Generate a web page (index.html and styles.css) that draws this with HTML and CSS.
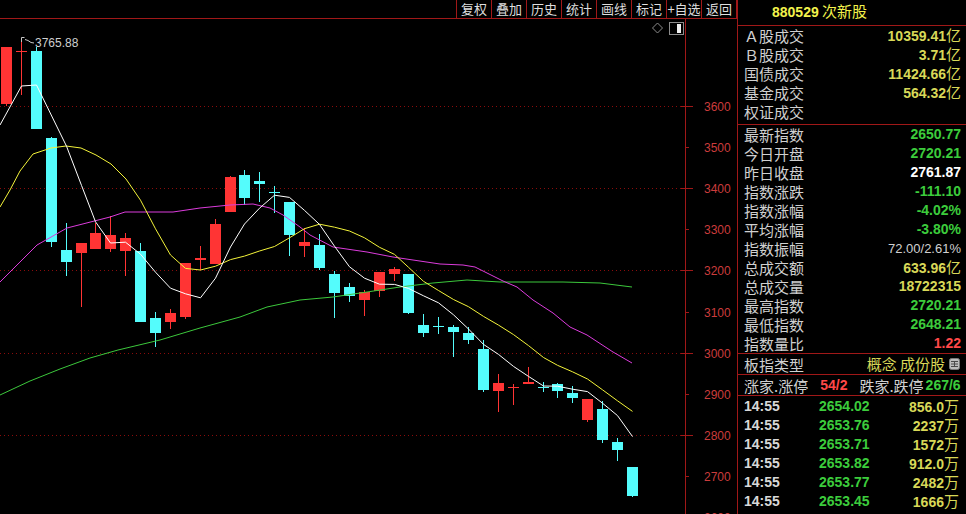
FILE: index.html
```html
<!DOCTYPE html>
<html>
<head>
    <meta charset="utf-8">
    <link rel="stylesheet" href="styles.css">
</head>
<body>
    <div class="screen">
        <div class="left">
            <div class="toolbar">
                <span class="tool">复权</span>
                <span class="tool">叠加</span>
                <span class="tool">历史</span>
                <span class="tool">统计</span>
                <span class="tool">画线</span>
                <span class="tool">标记</span>
                <span class="tool">+自选</span>
                <span class="tool">返回</span>
            </div>
            <svg class="chart" viewBox="0 18 737 496" width="737" height="496"></svg>
        </div>

        <div class="panel">
            <div class="title"><b>880529</b> 次新股</div>

            <div class="block first">
                <div class="row"><span class="lbl">Ａ股成交</span><span class="num yel">10359.41<i class="unit">亿</i></span></div>
                <div class="row"><span class="lbl">Ｂ股成交</span><span class="num yel">3.71<i class="unit">亿</i></span></div>
                <div class="row"><span class="lbl">国债成交</span><span class="num yel">11424.66<i class="unit">亿</i></span></div>
                <div class="row"><span class="lbl">基金成交</span><span class="num yel">564.32<i class="unit">亿</i></span></div>
                <div class="row"><span class="lbl">权证成交</span><span class="num"></span></div>
            </div>

            <div class="block">
                <div class="row"><span class="lbl">最新指数</span><span class="num grn">2650.77</span></div>
                <div class="row"><span class="lbl">今日开盘</span><span class="num grn">2720.21</span></div>
                <div class="row"><span class="lbl">昨日收盘</span><span class="num wht">2761.87</span></div>
                <div class="row"><span class="lbl">指数涨跌</span><span class="num grn">-111.10</span></div>
                <div class="row"><span class="lbl">指数涨幅</span><span class="num grn">-4.02%</span></div>
                <div class="row"><span class="lbl">平均涨幅</span><span class="num grn">-3.80%</span></div>
                <div class="row"><span class="lbl">指数振幅</span><span class="num thin">72.00/2.61%</span></div>
                <div class="row"><span class="lbl">总成交额</span><span class="num yel">633.96<i class="unit">亿</i></span></div>
                <div class="row"><span class="lbl">总成交量</span><span class="num yel">18722315</span></div>
                <div class="row"><span class="lbl">最高指数</span><span class="num grn">2720.21</span></div>
                <div class="row"><span class="lbl">最低指数</span><span class="num grn">2648.21</span></div>
                <div class="row"><span class="lbl">指数量比</span><span class="num red">1.22</span></div>
            </div>

            <div class="block kind">
                <span class="lbl">板指类型</span>
                <span class="kind-val">概念 成份股
                    <svg class="ico" width="11" height="12" viewBox="0 0 11 12">
                        <rect x="0.5" y="0.5" width="10" height="11" rx="2" fill="#bdbdbd" stroke="#7a7a7a"/>
                        <path d="M2 3.5h7M2 6h7M2 8.5h7M5.5 3v6" stroke="#4a4a4a"/>
                    </svg>
                </span>
            </div>

            <div class="block breadth">
                <span class="lbl">涨家.涨停</span>
                <span class="num red count">54/2</span>
                <span class="lbl fall">跌家.跌停</span>
                <span class="num grn">267/6</span>
            </div>

            <div class="ticks">
                <div class="tick"><span class="num time">14:55</span><span class="num grn">2654.02</span><span class="num yel vol">856.0<i class="unit">万</i></span></div>
                <div class="tick"><span class="num time">14:55</span><span class="num grn">2653.76</span><span class="num yel vol">2237<i class="unit">万</i></span></div>
                <div class="tick"><span class="num time">14:55</span><span class="num grn">2653.71</span><span class="num yel vol">1572<i class="unit">万</i></span></div>
                <div class="tick"><span class="num time">14:55</span><span class="num grn">2653.82</span><span class="num yel vol">912.0<i class="unit">万</i></span></div>
                <div class="tick"><span class="num time">14:55</span><span class="num grn">2653.77</span><span class="num yel vol">2482<i class="unit">万</i></span></div>
                <div class="tick"><span class="num time">14:55</span><span class="num grn">2653.45</span><span class="num yel vol">1666<i class="unit">万</i></span></div>
                <div class="tick"><span class="num time">14:55</span><span class="num grn">2653.52</span><span class="num yel vol">587.0<i class="unit">万</i></span></div>
            </div>
        </div>
    </div>

    <script>
        const NS = "http://www.w3.org/2000/svg";
        const chart = document.querySelector(".chart");

        // open, close, high, low (screen rows)
        const bars = [
            [104, 47, 47, 106], [52, 51, 38, 95], [51, 129, 47, 129], [138, 242, 137, 247],
            [250, 262, 223, 276], [253, 243, 243, 307], [249, 233, 223, 249], [249, 235, 216, 252],
            [251, 238, 233, 276], [251, 322, 243, 322], [318, 333, 312, 347], [322, 313, 309, 329],
            [317, 263, 263, 319], [260, 258, 246, 270], [264, 224, 219, 264], [212, 177, 176, 212],
            [175, 198, 170, 205], [181, 184, 172, 202], [192, 193, 186, 213], [202, 235, 202, 256],
            [246, 242, 228, 257], [245, 268, 234, 270], [274, 293, 271, 318], [287, 296, 283, 302],
            [300, 292, 290, 316], [291, 272, 272, 297], [274, 269, 267, 281], [274, 313, 274, 314],
            [325, 333, 314, 337], [326, 327, 317, 334], [327, 332, 325, 357], [333, 340, 327, 344],
            [349, 390, 340, 392], [391, 383, 374, 412], [388, 387, 384, 405], [384, 382, 367, 384],
            [387, 388, 382, 392], [384, 391, 383, 398], [393, 398, 386, 403], [420, 399, 399, 422],
            [409, 440, 401, 443], [442, 450, 438, 461], [467, 496, 467, 497]
        ];

        function add(tag, attrs, text){
            let el = document.createElementNS(NS, tag);
            for(let k in attrs){
                el.setAttribute(k, attrs[k]);
            }
            if(text){
                el.textContent = text;
            }
            chart.appendChild(el);
            return el;
        }

        function priceY(p){
            return Math.round(106 + (3600 - p) * 0.41111) + 0.5;
        }

        function colX(i){
            return Math.floor(6.5 + i * 14.905);
        }

        function movingAvg(n){
            let pts = [];
            for(let i = n - 1; i < bars.length; i++){
                let sum = 0;
                for(let j = i - n + 1; j <= i; j++){
                    sum += bars[j][1];
                }
                pts.push([colX(i) + 0.5, (sum / n).toFixed(1)]);
            }
            return pts;
        }

        function drawLine(pts, cls){
            add("polyline", {points: pts.map(p => p.join(",")).join(" "), class: "ma " + cls});
        }

        add("line", {x1: 0, x2: 737, y1: 18.5, y2: 18.5, class: "axis"});

        [3600, 3400, 3200, 3000, 2800].forEach(p => {
            add("line", {x1: 0, x2: 685, y1: priceY(p), y2: priceY(p), class: "grid"});
        });

        add("line", {x1: 685.5, x2: 685.5, y1: 18, y2: 514, class: "axis"});
        for(let p = 3600; p >= 2600; p -= 100){
            let y = priceY(p);
            let major = p % 200 === 0;
            add("line", {x1: major ? 681 : 685, x2: major ? 693 : 689, y1: y, y2: y, class: "axis"});
            add("text", {x: 704, y: y + 4, class: "price"}, String(p));
        }

        bars.forEach((b, i) => {
            let [o, c, h, l] = b;
            let x = colX(i);
            let cls = c < o ? "up" : "down";
            add("line", {x1: x + 0.5, x2: x + 0.5, y1: h, y2: l, class: "wick " + cls});
            add("rect", {x: x - 5, y: Math.min(o, c), width: 11, height: Math.max(1, Math.abs(o - c)), class: "body " + cls});
        });

        drawLine([[0,395],[30,381],[60,369],[90,358],[118,350],[160,340],[200,328],[240,317],[267,307],
                  [300,300],[333,297],[367,292],[400,287],[433,283],[467,280],[500,282],[563,282],
                  [600,283],[632,287]], "ma60");
        drawLine([[0,282],[37,245],[67,228],[110,217],[125,212],[173,212],[200,208],[230,205],[253,204],
                  [270,208],[283,215],[300,227],[310,235],[333,247],[367,252],[393,257],[413,260],
                  [440,264],[463,265],[475,267],[487,273],[503,281],[517,287],[533,300],[553,313],
                  [570,327],[587,335],[613,352],[632,363]], "ma20");
        drawLine([[0,207],[10,190],[20,171],[33,154],[51,148],[66,146],[81,148],[96,155],[111,164],[126,179]]
                  .concat(movingAvg(10)), "ma10");
        drawLine([[0,125],[21.5,86],[36.5,85]].concat(movingAvg(5)), "ma5");

        add("path", {d: "M21.5 42 V37.5 H24.5 M25 39.5 L28 40.5 L31 42.5 L34 43", class: "mark"});
        add("text", {x: 35, y: 47, class: "hint"}, "3765.88");

        add("polygon", {points: "657.5,23 662.5,28 657.5,33 652.5,28", class: "icon"});
        add("rect", {x: 669.5, y: 22.5, width: 14, height: 12, class: "icon"});
        add("rect", {x: 677, y: 24, width: 4, height: 9, class: "knob"});
    </script>
</body>
</html>
```

FILE: styles.css
```css
body{
    margin: 0;
    background-color: #000;
}

.screen{
    display: flex;
    width: 966px;
    height: 514px;
    overflow: hidden;
    background-color: #000;
    font-family: "Liberation Sans", "Noto Sans CJK SC", sans-serif;
}

.left{
    width: 737px;
    display: flex;
    flex-direction: column;
}

.toolbar{
    height: 18px;
    display: flex;
    justify-content: flex-end;
}

.tool{
    width: 34px;
    border-left: 1px solid #a01818;
    color: #dedede;
    font: 13px/17px "Noto Sans CJK SC", sans-serif;
    text-align: center;
    white-space: nowrap;
}

.tool:last-child{
    border-right: 1px solid #a01818;
}

.chart{
    display: block;
    width: 737px;
    height: 496px;
}

/* chart pieces */
.grid{
    stroke: #8a0c0c;
    stroke-dasharray: 1 3;
}

.axis{
    stroke: #a01818;
}

.price{
    fill: #cc3c3c;
    font: 12px "Liberation Sans", sans-serif;
}

rect.up{ fill: #ff3434; }
rect.down{ fill: #54fcfc; }
line.up{ stroke: #ff3434; }
line.down{ stroke: #54fcfc; }

.ma{
    fill: none;
    stroke-width: 1;
}

.ma5{ stroke: #ffffff; }
.ma10{ stroke: #f4f43a; }
.ma20{ stroke: #dc3cdc; }
.ma60{ stroke: #3cc83c; }

.mark{
    fill: none;
    stroke: #c8c8c8;
}

.hint{
    fill: #cfcfcf;
    font: 12px "Liberation Sans", sans-serif;
}

.icon{
    fill: none;
    stroke: #8c8c8c;
}

.knob{
    fill: #f0f0f0;
}

/* right panel */
.panel{
    width: 228px;
    border-left: 1px solid #a01818;
    color: #cfcfcf;
}

.title{
    height: 25px;
    line-height: 21px;
    padding-left: 34px;
    border-bottom: 1px solid #a01818;
    color: #f2f24c;
    font: 15px/21px "Noto Sans CJK SC", sans-serif;
}

.title b{
    font: bold 14px "Liberation Sans", sans-serif;
}

.block{
    border-bottom: 1px solid #a01818;
}

.first{
    padding-bottom: 3px;
}

.row{
    display: flex;
    justify-content: space-between;
    align-items: center;
    height: 19px;
    padding: 0 5px 0 6px;
}

.lbl{
    font: 15px/19px "Noto Sans CJK SC", sans-serif;
    color: #d0d0d0;
    white-space: nowrap;
}

.num{
    font: bold 14px/19px "Liberation Sans", sans-serif;
    white-space: nowrap;
}

.unit{
    font: normal 15px/19px "Noto Sans CJK SC", sans-serif;
}

.thin{
    font-weight: normal;
    font-size: 13px;
    color: #d0d0d0;
}

.yel{ color: #d8d858; }
.grn{ color: #3ccc3c; }
.wht{ color: #ffffff; }
.red{ color: #ff4848; }

.kind{
    display: flex;
    justify-content: space-between;
    align-items: center;
    height: 20px;
    padding: 0 6px 0 6px;
}

.kind-val{
    display: flex;
    align-items: center;
    gap: 4px;
    color: #d8d858;
    font: 15px/20px "Noto Sans CJK SC", sans-serif;
}

.breadth{
    display: flex;
    align-items: center;
    height: 20px;
    padding-left: 6px;
    white-space: nowrap;
}

.count{
    margin-left: 12px;
}

.fall{
    margin-left: 12px;
    margin-right: 2px;
}

.ticks{
    overflow: hidden;
}

.tick{
    display: grid;
    grid-template-columns: 75px auto 1fr;
    align-items: center;
    height: 19px;
    padding: 0 7px 0 6px;
}

.time{
    color: #d8d8d8;
}

.vol{
    text-align: right;
}
```
